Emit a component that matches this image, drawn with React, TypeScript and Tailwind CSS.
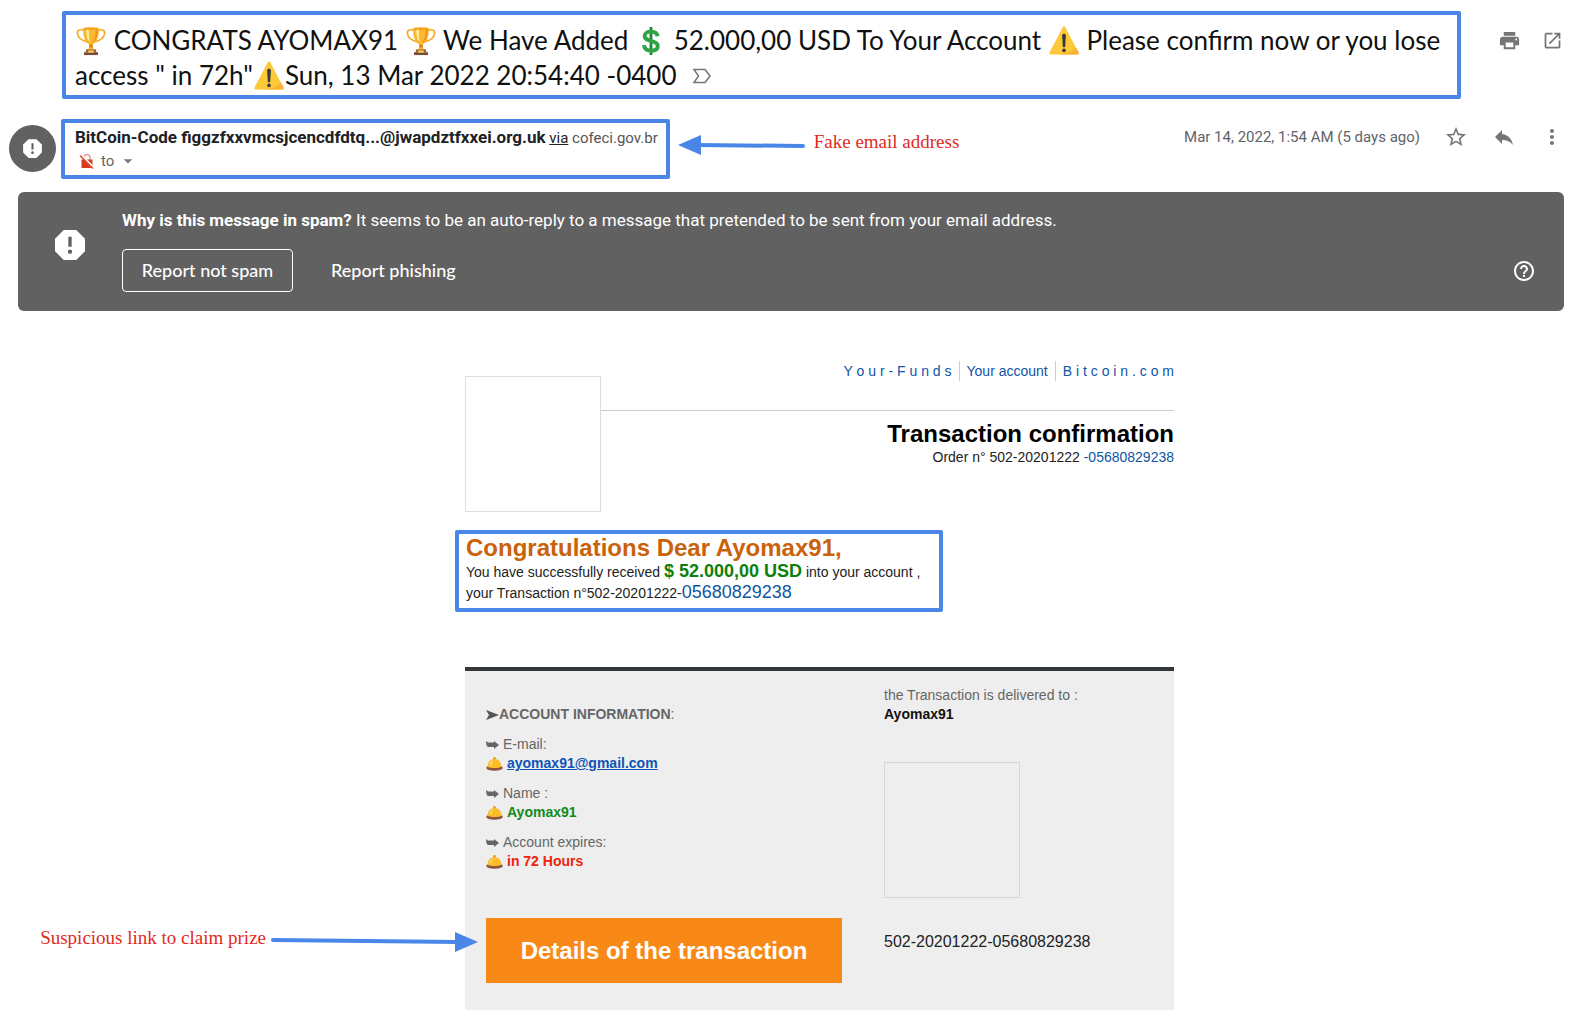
import React from "react";
import {
  MdArrowDropDown,
  MdHelpOutline,
  MdMoreVert,
  MdOpenInNew,
  MdPrint,
  MdReply,
  MdReport,
  MdStarBorder,
} from "react-icons/md";

const sans = "font-['Liberation_Sans',Arial,sans-serif]";

function Trophy() {
  return (
    <svg viewBox="0 0 32 32" className="mx-px inline-block size-[30px] align-[-6px]" role="img" aria-label="trophy">
      <path d="M9 5C5 3 1 4 1.500 8c.5 4.500 5 7.500 10.500 9M23 5c4-2 8-1 7.500 3-.5 4.500-5 7.500-10.500 9" fill="none" stroke="#f5a928" strokeWidth="1.800" />
      <path d="M7.500 2.500h17C24.500 11 23 17 18 19.500v2.500c0 2 1.500 2.500 2.500 4h-9c1-1.500 2.500-2 2.500-4v-2.500C9 17 7.500 11 7.500 2.500z" fill="#fbb832" />
      <path d="M11 4c0 6 1 10 3.500 13-.5-4-1-8-.8-13z" fill="#fff0a0" />
      <path d="M21 4c0 6-1 10-3.500 14 4-2 5.500-8 5.800-14z" fill="#f08f1c" />
      <ellipse cx="16" cy="2.800" rx="8.500" ry="1.600" fill="#f7a71f" />
      <path d="M14 20h4l-.6 3h-2.800z" fill="#d97d15" />
      <path d="M10.500 25h11v3h-11z" fill="#946148" />
      <path d="M8.500 28h15v3h-15z" fill="#7b4b38" />
      <path d="M13 26h6v2.500h-6z" fill="#fbc84b" />
    </svg>
  );
}

function Warning() {
  return (
    <svg viewBox="0 0 32 32" className="mx-px inline-block size-[30px] align-[-6px]" role="img" aria-label="warning">
      <path d="M14.700 1.300c.6-1 2-1 2.600 0l14.200 27c.5 1.200 0 2.200-1.300 2.200H1.800c-1.300 0-1.800-1-1.300-2.200z" fill="#fdc93a" />
      <path d="M29 23l2.500 5.500c.4 1.100-.2 2-1.500 2H4c12 0 20-2 25-7.500z" fill="#f9b233" />
      <path d="M14 10c0-2.400 4-2.400 4 0l-.7 11.500c-.1 1.700-2.500 1.700-2.600 0z" fill="#36393b" />
      <circle cx="16" cy="26" r="1.900" fill="#36393b" />
    </svg>
  );
}

function Dollar() {
  return (
    <svg viewBox="0 0 32 32" className="mx-px inline-block size-[30px] align-[-6px]" role="img" aria-label="dollar">
      <path d="M16 1v30" stroke="#1e8a35" strokeWidth="3" />
      <path d="M23 11c-.5-3.500-3-5-7-5s-6.800 1.700-6.800 4.700c0 3.600 3.300 4.300 6.800 5.100s7.200 1.700 7.200 5.500c0 3.300-2.900 5-7.200 5s-7.200-1.900-7.500-5.800" fill="none" stroke="#2fa346" strokeWidth="4.200" />
    </svg>
  );
}

function Bell() {
  return (
    <svg viewBox="0 0 17 15" className="h-[15px] w-[17px] shrink-0" role="img" aria-label="bell">
      <ellipse cx="8.500" cy="12" rx="8.300" ry="2.700" fill="#8b5540" />
      <path d="M1.500 10.500C1.700 6 4.500 3 8.500 3s6.800 3 7 7.500c-2.500 2-11.500 2-14 0z" fill="#fbbd2c" />
      <path d="M4 9c.3-2.500 1.500-4 3.500-4.700C6 6 5.500 7.500 5.500 9.500z" fill="#ffe587" />
      <circle cx="8.500" cy="2.200" r="1.300" fill="#e5981d" />
    </svg>
  );
}

function EncryptionOff() {
  return (
    <svg viewBox="0 0 16 16" className="size-4" role="img" aria-label="not encrypted">
      <path d="M5 7V4.500a3 3 0 0 1 6 0V7" fill="none" stroke="#e8a295" strokeWidth="1.500" />
      <path d="M2.500 6.500h11v8.500h-11z" fill="#d93a1e" />
      <path d="M1.500 1.500l13 13.500" stroke="#fff" strokeWidth="2.800" />
      <path d="M1 2.500l13 13" stroke="#d93a1e" strokeWidth="1.200" />
    </svg>
  );
}

function ImportantMarker() {
  return (
    <svg viewBox="0 0 20 16" className="h-4 w-5" aria-hidden="true">
      <path d="M2 1.500h11l5 6.500-5 6.500H2L6.500 8z" fill="none" stroke="#757575" strokeWidth="1.500" />
    </svg>
  );
}

function IconButton({ label, children }: { label: string; children: React.ReactNode }) {
  return (
    <button type="button" aria-label={label} className="flex size-6 items-center justify-center text-[#757575]">
      {children}
    </button>
  );
}

function Field({ label, children }: { label: string; children: React.ReactNode }) {
  return (
    <div className="leading-[19px]">
      <dt className="flex items-center gap-1">
        <svg viewBox="0 0 13 8" className="h-2 w-[13px]" aria-hidden="true">
          <path d="M0 0l2 1.500h6V0l5 4-5 4V6H2.500C1 6 .3 4.500 0 0z" fill="#666" />
        </svg>
        {label}
      </dt>
      <dd className="flex items-center gap-1 font-bold">
        <Bell />
        {children}
      </dd>
    </div>
  );
}

export default function App() {
  return (
    <main className="min-h-screen overflow-x-hidden bg-white font-[Roboto,sans-serif] text-[#222]">
      <header className="flex items-start pt-[11px] pr-[15px] pl-[62px]">
        <h1 className="flex-1 rounded-xs border-4 border-[#4a86e8] px-[9px] pt-2 pb-[2px] font-[Lato,sans-serif] text-[26px] leading-[35px] whitespace-nowrap text-[#111]">
          <span className="block">
            <Trophy /> CONGRATS AYOMAX91 <Trophy /> We Have Added <Dollar /> 52.000,00 USD To Your Account <Warning /> Please confirm now or you lose
          </span>
          <span className="flex items-center">
            <span>
              access " in 72h"
              <Warning />
              Sun, 13 Mar 2022 20:54:40 -0400
            </span>
            <button type="button" aria-label="Mark as important" className="ml-4">
              <ImportantMarker />
            </button>
          </span>
        </h1>
        <div className="ml-9 flex gap-[19px] pt-[17px]">
          <IconButton label="Print all"><MdPrint size={23} /></IconButton>
          <IconButton label="In new window"><MdOpenInNew size={21} /></IconButton>
        </div>
      </header>

      <section className="mt-5 flex items-start pr-[15px] pl-[9px]">
        <div className="mt-[6px] flex size-[47px] shrink-0 items-center justify-center rounded-full bg-[#616161] text-white">
          <MdReport size={25} />
        </div>
        <div className="ml-[5px] h-[60px] rounded-xs border-4 border-[#4a86e8] pt-[3px] pr-2 pl-[10px] text-[15px] whitespace-nowrap">
          <p className="leading-[22px] text-[#555]">
            <span className="text-[17px] font-bold text-[#202124]">BitCoin-Code figgzfxxvmcsjcencdfdtq...@jwapdztfxxei.org.uk</span>{" "}
            <a href="#via" className="text-[#222] underline">via</a> cofeci.gov.br
          </p>
          <p className="flex items-center pl-1 leading-[24px] text-[#666]">
            <EncryptionOff />
            <span className="ml-[6px]">to</span>
            <button type="button" aria-label="Show details" className="ml-1 text-[#757575]"><MdArrowDropDown size={20} /></button>
          </p>
        </div>
        <svg viewBox="0 0 128 20" className="mt-4 ml-2 h-5 w-32 shrink-0" aria-hidden="true">
          <path d="M20 10l105 1" stroke="#4a86e8" strokeWidth="4" strokeLinecap="round" />
          <path d="M0 10L23 0v20z" fill="#4a86e8" />
        </svg>
        <p className="mt-3 ml-2 font-['Liberation_Serif',serif] text-[19px] leading-[22px] whitespace-nowrap text-[#e02b1d]">Fake email address</p>
        <div className="ml-auto flex items-center gap-6 pt-[6px]">
          <time dateTime="2022-03-14T01:54" className="text-[15px] whitespace-nowrap text-[#5f6368]">Mar 14, 2022, 1:54 AM (5 days ago)</time>
          <IconButton label="Star"><MdStarBorder size={24} /></IconButton>
          <IconButton label="Reply"><MdReply size={24} /></IconButton>
          <IconButton label="More"><MdMoreVert size={24} /></IconButton>
        </div>
      </section>

      <section className="mt-[13px] mr-[15px] ml-[18px] flex rounded-md bg-[#616161] text-[17px] text-white">
        <div className="flex w-[104px] items-center justify-center pb-[14px]"><MdReport size={40} /></div>
        <div className="flex-1 pt-4 pb-[19px]">
          <p className="leading-[24px]">
            <b>Why is this message in spam?</b> It seems to be an auto-reply to a message that pretended to be sent from your email address.
          </p>
          <div className="mt-[17px] flex items-center font-[Lato,sans-serif] text-[18px] font-medium">
            <button type="button" className="h-[43px] w-[171px] rounded-sm border border-white">Report not spam</button>
            <button type="button" className="ml-[38px]">Report phishing</button>
            <button type="button" aria-label="Help" className="mr-7 ml-auto"><MdHelpOutline size={24} /></button>
          </div>
        </div>
      </section>

      <article className={`mx-auto mt-[50px] w-[709px] translate-x-[30px] text-[14px] ${sans}`}>
        <div className="flex">
          <div className="mt-[15px] size-[136px] border border-[#ddd]" />
          <div className="flex-1">
            <nav className="flex h-[50px] items-start justify-end border-b border-[#ccc] leading-[20px] text-[#0f55a5]">
              <a href="#funds">Y o u r - F u n d s</a>
              <a href="#account" className="mx-[7px] border-x border-[#ccc] px-[7px]">Your account</a>
              <a href="#bitcoin">B i t c o i n . c o m</a>
            </nav>
            <h2 className="mt-[9px] text-right text-[24px] leading-[28px] font-bold text-black">Transaction confirmation</h2>
            <p className="text-right leading-[19px]">
              Order n° 502-20201222 <a href="#order" className="text-[#0f55a5]">-05680829238</a>
            </p>
          </div>
        </div>

        <div className="mt-[18px] -ml-[10px] h-[82px] w-[488px] rounded-xs border-4 border-[#4a86e8] px-[7px] whitespace-nowrap">
          <h3 className="text-[24px] leading-[27px] font-bold text-[#c9620a]">Congratulations Dear Ayomax91,</h3>
          <p className="leading-[20px]">
            You have successfully received <b className="text-[18px] text-[#0b800b]">$ 52.000,00 USD</b> into your account ,
            <br />
            your Transaction n°502-20201222-<a href="#transaction" className="text-[18px] text-[#0f55a5]">05680829238</a>
          </p>
        </div>

        <div className="mt-[55px] flex min-h-[343px] border-t-4 border-[#333638] bg-[#eee] pl-[21px] text-[#666]">
          <div className="w-[398px] pt-[34px]">
            <h4 className="flex items-center leading-[19px] font-bold">
              <svg viewBox="0 0 13 10" className="h-[10px] w-[13px]" aria-hidden="true">
                <path d="M0 0l13 5L0 10l3-5z" fill="#555" />
              </svg>
              <span>ACCOUNT INFORMATION<span className="font-normal">:</span></span>
            </h4>
            <dl className="mt-[11px] flex flex-col gap-[11px]">
              <Field label="E-mail:"><a href="mailto:ayomax91@gmail.com" className="text-[#0f55b5] underline">ayomax91@gmail.com</a></Field>
              <Field label="Name :"><span className="text-[#118a1b]">Ayomax91</span></Field>
              <Field label="Account expires:"><span className="text-[#ee220c]">in 72 Hours</span></Field>
            </dl>
            <div className="relative mt-[47px] w-[356px]">
              <a href="#details" className="flex h-[65px] items-center justify-center bg-[#f98917] text-[24px] font-bold text-white">Details of the transaction</a>
              <div className="absolute top-[9px] right-full mr-2 flex items-center gap-1">
                <span className="pb-2 font-['Liberation_Serif',serif] text-[19px] leading-[22px] whitespace-nowrap text-[#e02b1d]">Suspicious link to claim prize</span>
                <svg viewBox="0 0 208 20" className="h-5 w-52 shrink-0" aria-hidden="true">
                  <path d="M3 8l185 2" stroke="#4a86e8" strokeWidth="4" strokeLinecap="round" />
                  <path d="M208 10L185 0v20z" fill="#4a86e8" />
                </svg>
              </div>
            </div>
          </div>
          <div className="pt-[15px] leading-[19px]">
            <p>the Transaction is delivered to :</p>
            <p className="font-bold text-[#111]">Ayomax91</p>
            <div className="mt-[38px] size-[136px] border border-[#d6d6d6]" />
            <p className="mt-[34px] text-[16px] text-[#222]">502-20201222-05680829238</p>
          </div>
        </div>
      </article>
    </main>
  );
}
